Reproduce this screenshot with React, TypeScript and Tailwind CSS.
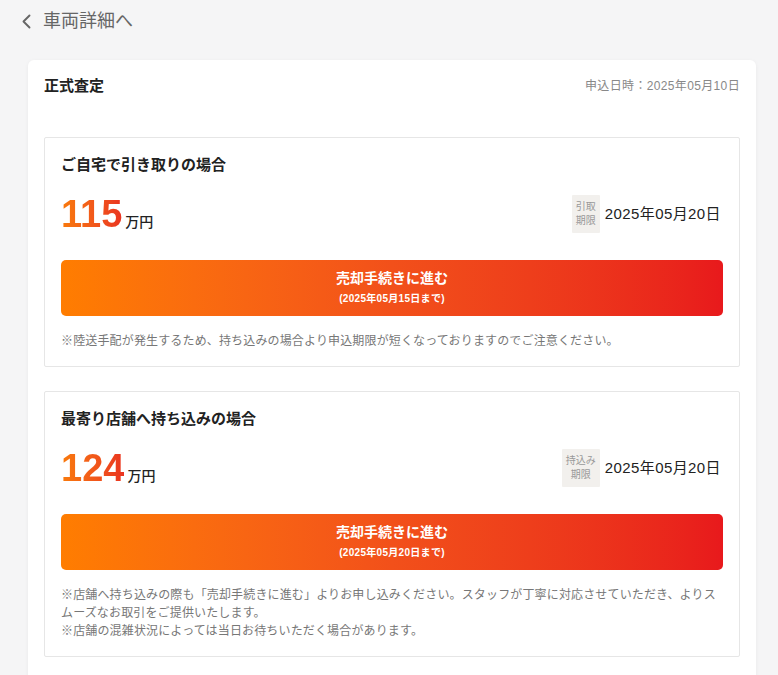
import React from "react";

const FONT = {fontFamily: '"Liberation Sans", "Noto Sans CJK JP", sans-serif'};

interface OfferProps {
  title: string;
  price: string;
  badge: string[];
  deadline: string;
  buttonSub: string;
  notes: string[];
}

const OfferCard = ({title, price, badge, deadline, buttonSub, notes}: OfferProps) => (
  <div className="border border-[#e6e6e6] rounded-[2px] px-4 pt-[17px] pb-[16px]">
    <div className="text-[15px] leading-[20px] font-semibold text-[#222]">{title}</div>
    <div className="mt-[17px] h-[44px] flex items-center justify-between">
      <div className="flex items-baseline">
        <span className="text-[38px] leading-none font-bold bg-gradient-to-r from-[#f97a0a] to-[#ea3320] bg-clip-text text-transparent">
          {price}
        </span>
        <span className="ml-[3px] text-[14px] text-[#222] font-medium">万円</span>
      </div>
      <div className="flex items-center gap-[5px] mr-[2px]">
        <div className="bg-[#f2f0ed] px-[4px] py-[5px] text-[10px] leading-[14px] text-[#999] text-center rounded-[1px]">
          {badge.map((b) => (
            <div key={b}>{b}</div>
          ))}
        </div>
        <div className="text-[15px] tracking-[0.4px] text-[#222]">{deadline}</div>
      </div>
    </div>
    <button className="mt-[24px] w-full h-[56px] rounded-[5px] bg-gradient-to-r from-[#ff7d00] via-[#f2501a] to-[#e8191c] text-white flex flex-col items-center pt-[8px]">
      <span className="text-[14px] leading-[20px] font-bold">売却手続きに進む</span>
      <span className="mt-[4px] text-[10px] leading-[14px] tracking-[0.3px] font-bold">{buttonSub}</span>
    </button>
    <div className="mt-[16px] text-[12px] leading-[18px] tracking-[0.15px] text-[#777]">
      {notes.map((n) => (
        <div key={n}>{n}</div>
      ))}
    </div>
  </div>
);

export default function App() {
  return (
    <div className="min-h-[675px] bg-[#f5f5f6] overflow-hidden" style={FONT}>
      <div className="flex items-center h-[42px] pl-[21px] pt-[1px] text-[#666]">
        <svg width="11" height="15" viewBox="0 0 11 15" fill="none" className="mr-[11px]">
          <path d="M8.5 1.5L2.5 7.5L8.5 13.5" stroke="#666" strokeWidth="1.9" strokeLinecap="round" strokeLinejoin="round"/>
        </svg>
        <span className="text-[18px]">車両詳細へ</span>
      </div>

      <div className="ml-[28px] mt-[18px] w-[728px] bg-white rounded-[6px] shadow-[0_1px_4px_rgba(0,0,0,0.05)] px-4 pt-4 pb-6">
        <div className="flex items-center justify-between h-[20px]">
          <div className="text-[15px] font-bold text-[#222]">正式査定</div>
          <div className="text-[12px] tracking-[0.35px] text-[#888]">申込日時：2025年05月10日</div>
        </div>

        <div className="mt-[41px] flex flex-col gap-[24px]">
          <OfferCard
            title="ご自宅で引き取りの場合"
            price="115"
            badge={["引取", "期限"]}
            deadline="2025年05月20日"
            buttonSub="(2025年05月15日まで)"
            notes={["※陸送手配が発生するため、持ち込みの場合より申込期限が短くなっておりますのでご注意ください。"]}
          />
          <OfferCard
            title="最寄り店舗へ持ち込みの場合"
            price="124"
            badge={["持込み", "期限"]}
            deadline="2025年05月20日"
            buttonSub="(2025年05月20日まで)"
            notes={[
              "※店舗へ持ち込みの際も「売却手続きに進む」よりお申し込みください。スタッフが丁寧に対応させていただき、よりスムーズなお取引をご提供いたします。",
              "※店舗の混雑状況によっては当日お待ちいただく場合があります。",
            ]}
          />
        </div>
      </div>
    </div>
  );
}
